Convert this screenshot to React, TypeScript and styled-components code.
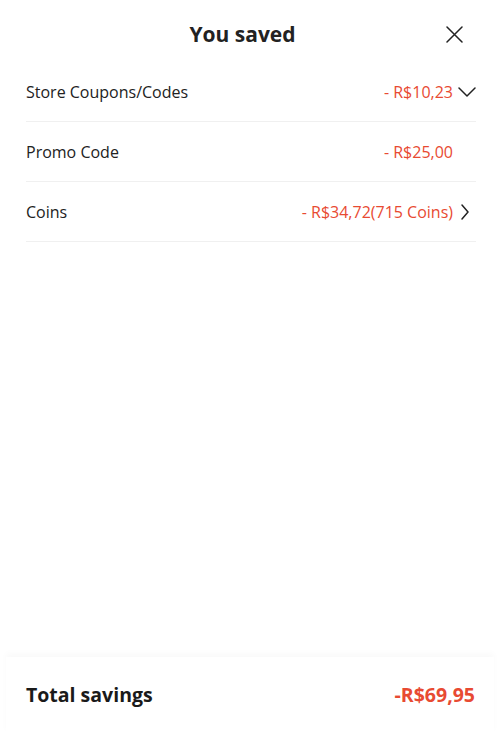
import React from "react"
import styled, { createGlobalStyle } from "styled-components"

const GlobalStyle = createGlobalStyle`
  html, body {
    margin: 0;
    padding: 0;
    background: #fff;
    font-family: "Open Sans", "Noto Sans", sans-serif;
  }
`

interface SavingRow {
  label: string
  amount: string
  icon?: "down" | "right"
}

const rows: SavingRow[] = [
  { label: "Store Coupons/Codes", amount: "- R$10,23", icon: "down" },
  { label: "Promo Code", amount: "- R$25,00" },
  { label: "Coins", amount: "- R$34,72(715 Coins)", icon: "right" },
]

const CloseIcon = () => (
  <svg width="17" height="17" viewBox="0 0 17 17" fill="none">
    <path d="M1 1L16 16M16 1L1 16" stroke="#222" strokeWidth="1.5" strokeLinecap="round" />
  </svg>
)

const ChevronDown = () => (
  <svg width="18" height="10" viewBox="0 0 18 10" fill="none">
    <path d="M1 1L9 9L17 1" stroke="#222" strokeWidth="1.5" strokeLinecap="round" strokeLinejoin="round" />
  </svg>
)

const ChevronRight = () => (
  <svg width="8" height="16" viewBox="0 0 8 16" fill="none">
    <path d="M1 1L7 8L1 15" stroke="#222" strokeWidth="1.5" strokeLinecap="round" strokeLinejoin="round" />
  </svg>
)

const App: React.FC = () => {
  return (
    <Sheet>
      <GlobalStyle />
      <Header>
        <Title>You saved</Title>
        <CloseButton aria-label="Close">
          <CloseIcon />
        </CloseButton>
      </Header>

      <List>
        {rows.map((row) => (
          <Row key={row.label}>
            <Label>{row.label}</Label>
            <Amount>{row.amount}</Amount>
            <IconSlot $align={row.icon === "right" ? "center" : "flex-end"}>
              {row.icon === "down" && <ChevronDown />}
              {row.icon === "right" && <ChevronRight />}
            </IconSlot>
          </Row>
        ))}
      </List>

      <Footer>
        <TotalLabel>Total savings</TotalLabel>
        <TotalAmount>-R$69,95</TotalAmount>
      </Footer>
    </Sheet>
  )
}

export default App

const Sheet = styled.div`
  display: flex;
  flex-direction: column;
  height: 100vh;
  background: #fff;
  color: #222;
`

const Header = styled.div`
  position: relative;
  height: 62px;
  display: flex;
  align-items: center;
  justify-content: center;
`

const Title = styled.h1`
  margin: 0 15px -6px 0;
  font-size: 21px;
  font-weight: 700;
  color: #222;
`

const CloseButton = styled.button`
  position: absolute;
  right: 37px;
  top: 26px;
  padding: 0;
  border: none;
  background: none;
  display: flex;
`

const List = styled.div`
  flex: 1;
  padding: 0 24px 0 26px;
`

const Row = styled.div`
  height: 59px;
  display: flex;
  align-items: center;
  border-bottom: 1px solid #f0f0f0;
`

const Label = styled.span`
  flex: 1;
  font-size: 16px;
  font-weight: 500;
  color: #222;
`

const Amount = styled.span`
  font-size: 16px;
  font-weight: 500;
  color: #e84a32;
`

const IconSlot = styled.span<{ $align: string }>`
  width: 23px;
  display: flex;
  justify-content: ${(p) => p.$align};
  align-items: center;
  margin-top: 1px;
`

const Footer = styled.div`
  height: 74px;
  margin: 0 6px;
  padding: 0 19px 3px 20px;
  display: flex;
  align-items: center;
  justify-content: space-between;
  box-shadow: 0 -4px 6px rgba(0, 0, 0, 0.025);
`

const TotalLabel = styled.span`
  font-size: 19.5px;
  font-weight: 700;
  color: #1a1a1a;
`

const TotalAmount = styled.span`
  font-size: 19.5px;
  font-weight: 700;
  color: #e84a32;
`
